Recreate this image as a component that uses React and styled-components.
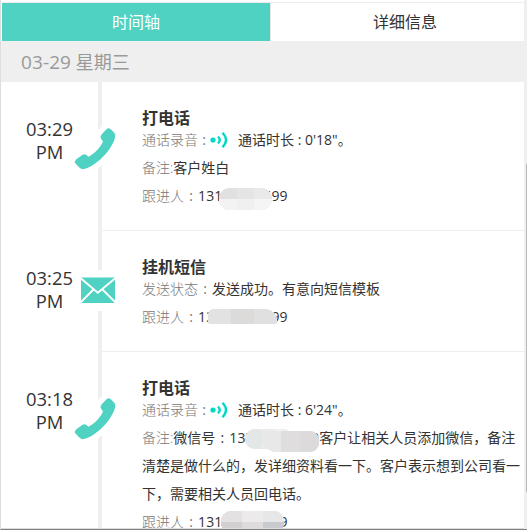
import styled, { createGlobalStyle } from "styled-components";

const GlobalStyle = createGlobalStyle`
  * {
    box-sizing: border-box;
  }
  body {
    margin: 0;
    background-color: #fff;
    font-family: "Open Sans", "Noto Sans CJK SC", sans-serif;
    color: #333;
  }
`;

const PHONE =
  "M40.500 5 L36.500 1 Q34.500 -0.500 32.500 1.200 L27.500 6.500 Q26 8.500 27 10.500 L29 13.500 C27 19 20 26 14.500 28.800 L12.500 27 Q10.500 25.500 8.500 26.800 L2 31.500 Q0 33.500 1.500 35.500 L5.500 39.800 Q8 42 11 40.800 C23 37 37 23 41 10 Q42 7 40.500 5 Z";

const PhoneIcon = () => (
  <PhoneSvg viewBox="-6 -6 54 54">
    <path d={PHONE} fill="#fff" stroke="#fff" strokeWidth="11" />
    <path d={PHONE} fill="#50d2c2" />
  </PhoneSvg>
);

const MailIcon = () => (
  <MailSvg viewBox="0 0 41 41">
    <rect width="41" height="41" fill="#fff" />
    <rect x="3" y="7.500" width="34" height="25.500" fill="#50d2c2" />
    <path
      d="M2.500 8 L19.800 22.800 L37.500 8 M2.500 32.500 L15.500 19.500 M37.500 32.500 L24.500 19.500"
      fill="none"
      stroke="#fff"
      strokeWidth="1.800"
    />
  </MailSvg>
);

const SoundIcon = () => (
  <SoundSvg viewBox="0 0 18 18">
    <circle cx="3" cy="9" r="2.600" fill="#00d8c6" />
    <path
      d="M8 5.500 Q11.500 9 8 12.500 M12.500 1.800 Q19.500 9 12.500 16.200"
      fill="none"
      stroke="#00d8c6"
      strokeWidth="2.300"
    />
  </SoundSvg>
);

const MaskedNumber = ({ value, masks }) => (
  <Number>
    {value}
    {masks.map((mask, i) => (
      <Mask key={i} $x={mask.x} $y={mask.y} $w={mask.w} $h={mask.h} $r={mask.r}>
        {mask.cells.map((color, j) => (
          <Cell key={j} $color={color} />
        ))}
      </Mask>
    ))}
  </Number>
);

const Recording = ({ duration }) => (
  <Line>
    <Label>通话录音</Label>
    <Colon $w={12} $light>
      :
    </Colon>
    <SoundIcon />
    通话时长
    <Colon $w={11}>:</Colon>
    {duration}
  </Line>
);

const Follower = ({ value, masks }) => (
  <Line>
    <Label>跟进人</Label>
    <Colon $w={14} $light>
      :
    </Colon>
    <MaskedNumber value={value} masks={masks} />
  </Line>
);

const TimelineItem = ({ time, icon, title, children }) => (
  <Item>
    <Time>
      {time}
      <br />
      PM
    </Time>
    <Rail>{icon}</Rail>
    <Content>
      <Title>{title}</Title>
      {children}
    </Content>
  </Item>
);

const App = () => {
  return (
    <>
      <GlobalStyle />
      <Window>
        <Panel>
          <Tabs>
            <Tab $active>时间轴</Tab>
            <Tab>详细信息</Tab>
          </Tabs>
          <DateBar>
            <DateText>03-29</DateText> 星期三
          </DateBar>
          <TimelineItem time="03:29" icon={<PhoneIcon />} title="打电话">
            <Recording duration={"0'18\"。"} />
            <Line>
              <Label>备注:</Label>客户姓白
            </Line>
            <Follower
              value="13100000599"
              masks={[
                {
                  x: 21,
                  y: 6,
                  w: 53,
                  h: 22,
                  r: "11px",
                  cells: ["#e1e1e2", "#e5e5e5", "#e9e9ea", "#f3f3f4", "#f0f0f1", "#f5f5f6"],
                },
              ]}
            />
          </TimelineItem>
          <TimelineItem time="03:25" icon={<MailIcon />} title="挂机短信">
            <Line>
              <Label>发送状态</Label>
              <Colon $w={14} $light>
                :
              </Colon>
              发送成功。有意向短信模板
            </Line>
            <Follower
              value="13700000599"
              masks={[
                {
                  x: 10,
                  y: 6,
                  w: 69,
                  h: 15,
                  r: "7px 14px 3px 3px",
                  cells: ["#e2e2e2", "#dcdbda", "#e0e0e1"],
                },
              ]}
            />
          </TimelineItem>
          <TimelineItem time="03:18" icon={<PhoneIcon />} title="打电话">
            <Recording duration={"6'24\"。"} />
            <Line>
              <Label>备注:</Label>微信号<Colon $w={14}>:</Colon>
              <MaskedNumber
                value="13700000009"
                masks={[
                  {
                    x: 16,
                    y: 5,
                    w: 48,
                    h: 20,
                    r: "10px",
                    cells: ["#e4e7e8", "#ebebed", "#f0eff1"],
                  },
                  {
                    x: 32,
                    y: 7,
                    w: 58,
                    h: 21,
                    r: "4px 9px 9px 16px",
                    cells: ["#e8e8e9", "#dfdddd", "#dcdada"],
                  },
                ]}
              />
              客户让相关人员添加微信，备注
              <br />
              清楚是做什么的，发详细资料看一下。客户表示想到公司看一
              <br />
              下，需要相关人员回电话。
            </Line>
            <Follower
              value="13100000599"
              masks={[
                {
                  x: 23,
                  y: 3,
                  w: 63,
                  h: 22,
                  r: "10px",
                  cells: ["#e3e1e2", "#eceaeb", "#e7e7e9", "#d2cfd0", "#dedbdc", "#c9cace"],
                },
              ]}
            />
          </TimelineItem>
        </Panel>
        <ScrollTrack>
          <ScrollThumb />
        </ScrollTrack>
      </Window>
    </>
  );
};

const Window = styled.div`
  display: grid;
  grid-template-columns: 1fr 3px;
  width: 527px;
  height: 530px;
  overflow: hidden;
  border-left: 1px solid #dedede;
  border-bottom: 1px solid #808080;
`;
const Panel = styled.div`
  height: 529px;
  overflow: hidden;
  border-bottom: 1px solid #ddd;
`;
const Tabs = styled.div`
  display: grid;
  grid-template-columns: 269px 1fr;
  height: 41px;
  margin-left: 1px;
  padding-top: 2px;
`;
const Tab = styled.div`
  height: 39px;
  border-top: 1px solid #ececec;
  border-right: ${({ $active }) => ($active ? "1px solid #e6e6e6" : "0")};
  padding-left: ${({ $active }) => ($active ? "0" : "15px")};
  background-color: ${({ $active }) => ($active ? "#50d2c2" : "#fff")};
  background-clip: padding-box;
  color: ${({ $active }) => ($active ? "#fff" : "#333")};
  font-size: 16px;
  line-height: 39px;
  text-align: center;
`;
const DateBar = styled.div`
  height: 41px;
  padding-left: 20px;
  background-color: #efefef;
  color: #999;
  font-size: 18px;
  line-height: 43px;
`;
const DateText = styled.span`
  font-size: 19px;
  letter-spacing: 0.1px;
`;
const Item = styled.div`
  display: grid;
  grid-template-columns: 97px 4px 1fr;
`;
const Time = styled.div`
  padding-top: 35px;
  font-size: 18.4px;
  line-height: 23px;
  text-align: center;
`;
const Rail = styled.div`
  display: flex;
  justify-content: center;
  align-items: flex-start;
  background-color: #efefef;
`;
const PhoneSvg = styled.svg`
  flex: none;
  width: 54px;
  height: 54px;
  margin-top: 40px;
  margin-right: 10px;
`;
const MailSvg = styled.svg`
  flex: none;
  width: 41px;
  height: 41px;
  margin-top: 39px;
  margin-right: 4px;
`;
const SoundSvg = styled.svg`
  width: 18px;
  height: 18px;
  margin-right: 10px;
  vertical-align: -4px;
`;
const Content = styled.div`
  padding: 28px 0 20px 40px;
  border-bottom: 1px solid #efefef;
  white-space: nowrap;
`;
const Title = styled.div`
  height: 16px;
  font-size: 16px;
  font-weight: bold;
  line-height: 17px;
`;
const Line = styled.div`
  font-size: 14px;
  line-height: 28px;
`;
const Label = styled.span`
  color: #777;
  font-weight: 300;
`;
const Colon = styled.span`
  display: inline-block;
  width: ${({ $w }) => $w}px;
  color: ${({ $light }) => ($light ? "#777" : "#333")};
  text-align: center;
`;
const Number = styled.span`
  display: inline-block;
  position: relative;
  width: 90px;
  height: 28px;
  letter-spacing: 0.15px;
  vertical-align: top;
`;
/* mosaic patch lying over part of a number */
const Mask = styled.span`
  position: absolute;
  left: ${({ $x }) => $x}px;
  top: ${({ $y }) => $y}px;
  display: grid;
  grid-template-columns: repeat(3, 1fr);
  width: ${({ $w }) => $w}px;
  height: ${({ $h }) => $h}px;
  border-radius: ${({ $r }) => $r};
  overflow: hidden;
  background-color: #dedee0;
`;
const Cell = styled.span`
  background-color: ${({ $color }) => $color};
`;
const ScrollTrack = styled.div`
  padding: 164px 0 0 2px;
  background-color: #efefef;
`;
const ScrollThumb = styled.div`
  height: 328px;
  background-color: #bbb;
`;

export default App;
